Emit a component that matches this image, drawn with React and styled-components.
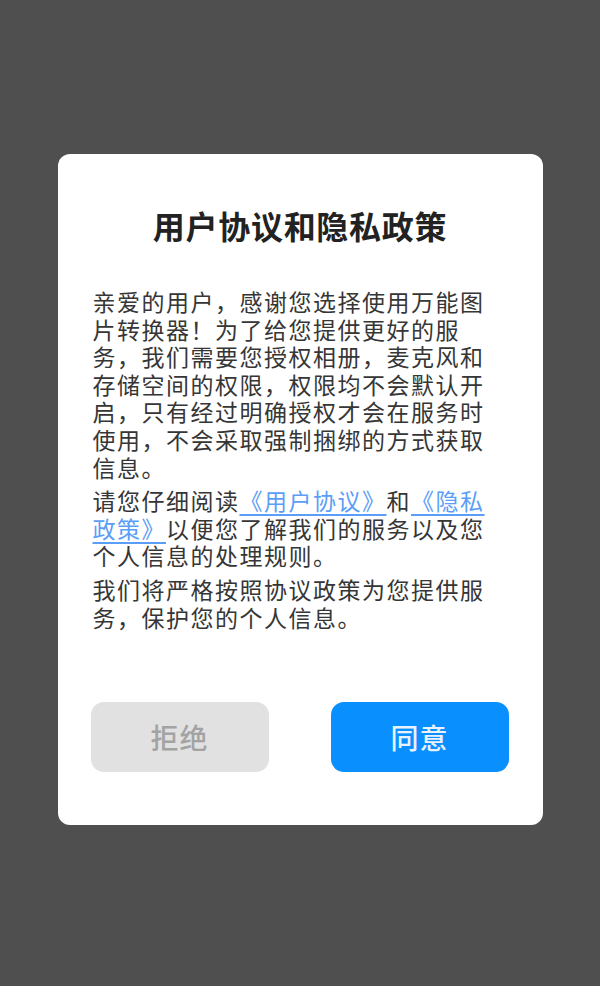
import React from "react"
import styled, { createGlobalStyle } from "styled-components"

const GlobalStyle = createGlobalStyle`
  html, body {
    margin: 0;
    padding: 0;
    background: #4f4f4f;
  }
  body {
    font-family: "Noto Sans CJK SC", "Noto Sans", sans-serif;
  }
`

const Screen = styled.div`
  width: 600px;
  height: 986px;
  display: flex;
  justify-content: center;
  padding-top: 154px;
  box-sizing: border-box;
  background: #4f4f4f;
`

const Card = styled.div`
  width: 485px;
  height: 671px;
  box-sizing: border-box;
  background: #fff;
  border-radius: 12px;
  padding-top: 47px;
  display: flex;
  flex-direction: column;
`

const Title = styled.h2`
  margin: 0;
  text-align: center;
  font-size: 32px;
  line-height: 48px;
  font-weight: 700;
  color: #222;
  letter-spacing: 0.7px;
`

const Body = styled.div`
  margin-top: 39px;
  padding: 0 35px;
  color: #363636;
  font-size: 23px;
  letter-spacing: 1.5px;
  line-height: 27.6px;
`

const Para = styled.p`
  margin: 0;
  & + & {
    margin-top: 6px;
  }
`

const Link = styled.a`
  color: #5b9ef7;
  text-decoration: underline;
  text-underline-offset: 4px;
`

const Actions = styled.div`
  margin-top: auto;
  margin-bottom: 53px;
  padding: 0 34px 0 33px;
  display: flex;
  justify-content: space-between;
`

const Button = styled.button`
  width: 178px;
  height: 70px;
  border: none;
  border-radius: 13px;
  font-family: inherit;
  font-size: 28px;
  font-weight: 500;
  letter-spacing: 1px;
  background: ${(p) => (p.$primary ? "#0a8ffe" : "#e1e1e1")};
  color: ${(p) => (p.$primary ? "#e8f2ff" : "#a3a3a3")};
`

const App = () => {
  return (
    <>
      <GlobalStyle />
      <Screen>
        <Card>
          <Title>用户协议和隐私政策</Title>
          <Body>
            <Para>
              亲爱的用户，感谢您选择使用万能图片转换器！为了给您提供更好的服务，我们需要您授权相册，麦克风和存储空间的权限，权限均不会默认开启，只有经过明确授权才会在服务时使用，不会采取强制捆绑的方式获取信息。
            </Para>
            <Para>
              请您仔细阅读<Link>《用户协议》</Link>和<Link>《隐私政策》</Link>以便您了解我们的服务以及您个人信息的处理规则。
            </Para>
            <Para>我们将严格按照协议政策为您提供服务，保护您的个人信息。</Para>
          </Body>
          <Actions>
            <Button>拒绝</Button>
            <Button $primary>同意</Button>
          </Actions>
        </Card>
      </Screen>
    </>
  )
}

export default App
